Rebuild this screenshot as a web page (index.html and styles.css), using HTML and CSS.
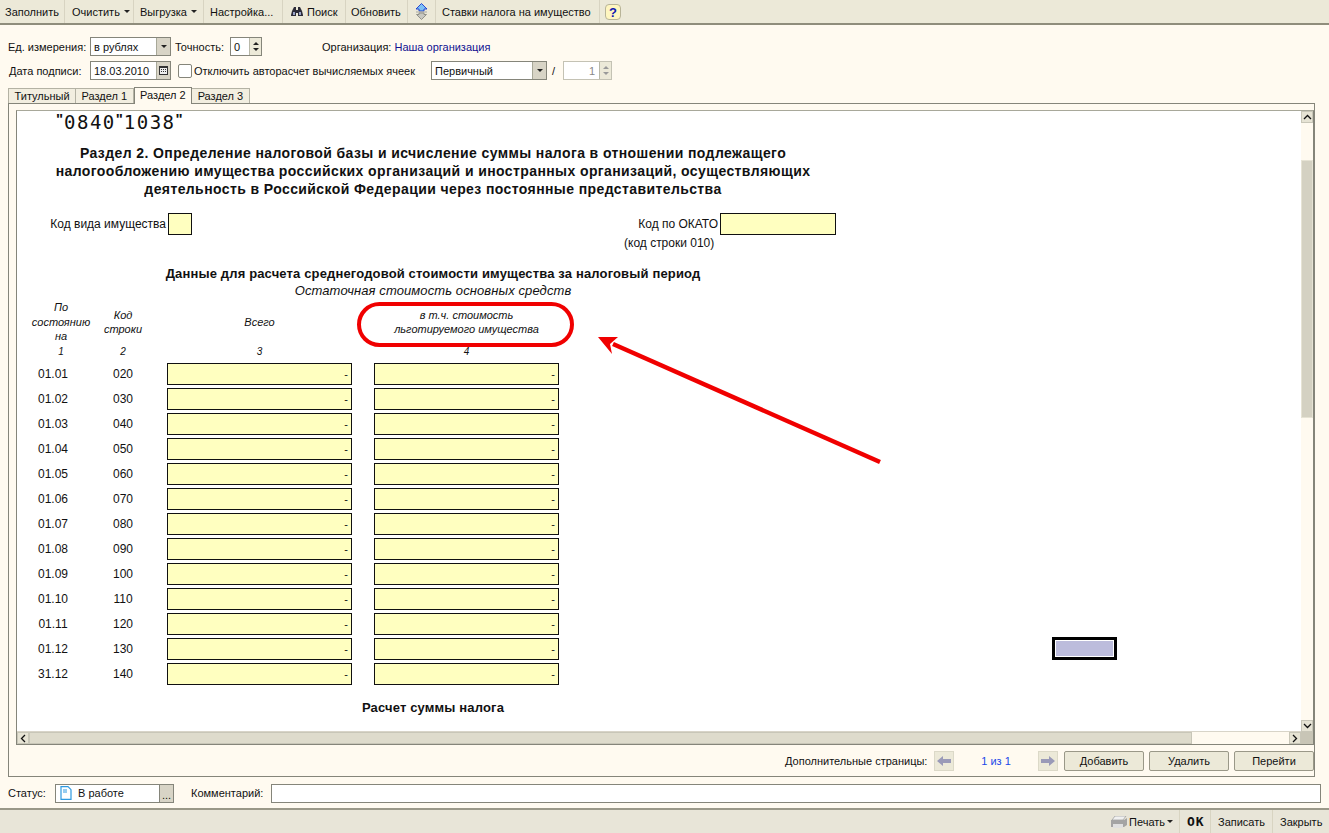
FILE: index.html
```html
<!DOCTYPE html>
<html lang="ru">
    <head>
        <meta charset="UTF-8">
        <title>Раздел 2</title>
        <link rel="stylesheet" href="styles.css">
    </head>
    <body>
        <div class="toolbar">
            <span class="tool t-fill">Заполнить</span>
            <span class="tool t-clear">Очистить <i class="caret"></i></span>
            <span class="tool t-export">Выгрузка <i class="caret"></i></span>
            <span class="tool t-setup">Настройка...</span>
            <span class="tool t-find">
                <svg width="12" height="9" viewBox="0 0 12 9"><path d="M1 4 L3 0 H5 V3 H7 V0 H9 L11 4 L12 8 V9 H7 V6 H5 V9 H0 V8 Z" fill="#2c2c38"/><rect x="2" y="5" width="2" height="3" fill="#9aa4c8"/><rect x="8" y="5" width="2" height="3" fill="#9aa4c8"/></svg>
                Поиск
            </span>
            <span class="tool t-refresh">Обновить</span>
            <span class="tool t-arrows">
                <svg width="13" height="17" viewBox="0 0 13 17"><path d="M6.5 .5 L12 6 H9 V8 H4 V6 H1 Z" fill="#7cc0f4" stroke="#1838d0" stroke-width=".9"/><path d="M1 9 H12" stroke="#a8a8a0"/><path d="M4 10 H9 V11.5 H11.5 L6.5 16.5 L1.5 11.5 H4 Z" fill="#c8c8c0" stroke="#8a8a82" stroke-width=".9"/></svg>
            </span>
            <span class="tool t-rates">Ставки налога на имущество</span>
            <span class="tool t-help"><b class="help">?</b></span>
        </div>

        <div class="params">
            <div class="param-row">
                <label class="lbl-unit">Ед. измерения:</label>
                <span class="field combo w-unit">в рублях<i class="drop"><i class="caret dark"></i></i></span>
                <label class="lbl-prec">Точность:</label>
                <span class="field spin w-prec">0<i class="spinner"><i class="up"></i><i class="down"></i></i></span>
                <span class="org">Организация: <a>Наша организация</a></span>
            </div>
            <div class="param-row">
                <label class="lbl-date">Дата подписи:</label>
                <span class="field combo w-date">18.03.2010<i class="drop cal"><svg width="9" height="9" viewBox="0 0 9 9"><path d="M0 0H9V9H0Z" fill="#333"/><path d="M1 2H8V8H1Z" fill="#eee"/><path d="M2 3H3V4H2ZM4 3H5V4H4ZM6 3H7V4H6ZM2 5H3V6H2ZM4 5H5V6H4ZM6 5H7V6H6Z" fill="#333"/></svg></i></span>
                <span class="check"></span>
                <label class="lbl-check">Отключить авторасчет вычисляемых ячеек</label>
                <span class="field combo w-kind">Первичный<i class="drop"><i class="caret dark"></i></i></span>
                <span class="slash">/</span>
                <span class="field spin off w-num">1<i class="spinner"><i class="up"></i><i class="down"></i></i></span>
            </div>
        </div>

        <div class="tabs">
            <span class="tab">Титульный</span>
            <span class="tab">Раздел 1</span>
            <span class="tab active">Раздел 2</span>
            <span class="tab">Раздел 3</span>
        </div>

        <div class="panel">
            <div class="sheet">
                <div class="view">
                    <div class="barcode"><span class="q">"</span>0840<span class="q">"</span>1038<span class="q">"</span></div>
                    <h2 class="title">Раздел 2. Определение налоговой базы и исчисление суммы налога в отношении подлежащего<br>налогообложению имущества российских организаций и иностранных организаций, осуществляющих<br>деятельность в Российской Федерации через постоянные представительства</h2>

                    <div class="codes">
                        <span class="code-label">Код вида имущества</span>
                        <span class="cell small"></span>
                        <span class="code-label okato">Код по ОКАТО</span>
                        <span class="cell middle"></span>
                    </div>
                    <div class="code-note">(код строки 010)</div>

                    <div class="caption">Данные для расчета среднегодовой стоимости имущества за налоговый период</div>
                    <div class="subcaption">Остаточная стоимость основных средств</div>

                    <div class="row head">
                        <span class="c-date">По<br>состоянию<br>на</span>
                        <span class="c-code">Код<br>строки</span>
                        <span class="c-val">Всего</span>
                        <span class="c-val second">в т.ч. стоимость<br>льготируемого имущества</span>
                    </div>
                    <div class="row nums">
                        <span class="c-date">1</span>
                        <span class="c-code">2</span>
                        <span class="c-val">3</span>
                        <span class="c-val second">4</span>
                    </div>

                    <div class="row"><span class="c-date">01.01</span><span class="c-code">020</span><span class="cell c-val">-</span><span class="cell c-val second">-</span></div>
                    <div class="row"><span class="c-date">01.02</span><span class="c-code">030</span><span class="cell c-val">-</span><span class="cell c-val second">-</span></div>
                    <div class="row"><span class="c-date">01.03</span><span class="c-code">040</span><span class="cell c-val">-</span><span class="cell c-val second">-</span></div>
                    <div class="row"><span class="c-date">01.04</span><span class="c-code">050</span><span class="cell c-val">-</span><span class="cell c-val second">-</span></div>
                    <div class="row"><span class="c-date">01.05</span><span class="c-code">060</span><span class="cell c-val">-</span><span class="cell c-val second">-</span></div>
                    <div class="row"><span class="c-date">01.06</span><span class="c-code">070</span><span class="cell c-val">-</span><span class="cell c-val second">-</span></div>
                    <div class="row"><span class="c-date">01.07</span><span class="c-code">080</span><span class="cell c-val">-</span><span class="cell c-val second">-</span></div>
                    <div class="row"><span class="c-date">01.08</span><span class="c-code">090</span><span class="cell c-val">-</span><span class="cell c-val second">-</span></div>
                    <div class="row"><span class="c-date">01.09</span><span class="c-code">100</span><span class="cell c-val">-</span><span class="cell c-val second">-</span></div>
                    <div class="row"><span class="c-date">01.10</span><span class="c-code">110</span><span class="cell c-val">-</span><span class="cell c-val second">-</span></div>
                    <div class="row"><span class="c-date">01.11</span><span class="c-code">120</span><span class="cell c-val">-</span><span class="cell c-val second">-</span></div>
                    <div class="row"><span class="c-date">01.12</span><span class="c-code">130</span><span class="cell c-val">-</span><span class="cell c-val second">-</span><span class="selected"></span></div>
                    <div class="row"><span class="c-date">31.12</span><span class="c-code">140</span><span class="cell c-val">-</span><span class="cell c-val second">-</span></div>

                    <div class="caption total">Расчет суммы налога</div>

                    <!-- пометки поверх листа -->
                    <div class="oval"></div>
                    <svg class="arrow" width="300" height="140" viewBox="0 0 300 140">
                        <path d="M283 127 L16 9" stroke="#f00000" stroke-width="4.5" fill="none"/>
                        <path d="M1 2 L21 2 L13 9 L15 19 Z" fill="#f00000"/>
                    </svg>
                </div>
                <div class="vbar">
                    <span class="sbtn"><svg width="9" height="6" viewBox="0 0 9 6"><path d="M1 5 L4.5 1.5 L8 5" fill="none" stroke="#111" stroke-width="1.3"/></svg></span>
                    <span class="vtrack"><i class="vthumb"></i></span>
                    <span class="sbtn"><svg width="9" height="6" viewBox="0 0 9 6"><path d="M1 1 L4.5 4.5 L8 1" fill="none" stroke="#111" stroke-width="1.3"/></svg></span>
                </div>
                <div class="hbar">
                    <span class="sbtn"><svg width="6" height="9" viewBox="0 0 6 9"><path d="M5 1 L1.5 4.5 L5 8" fill="none" stroke="#111" stroke-width="1.3"/></svg></span>
                    <span class="htrack"><i class="hthumb"></i></span>
                    <span class="sbtn"><svg width="6" height="9" viewBox="0 0 6 9"><path d="M1 1 L4.5 4.5 L1 8" fill="none" stroke="#111" stroke-width="1.3"/></svg></span>
                </div>
                <div class="corner"></div>
            </div>

            <div class="pages">
                <span class="pages-label">Дополнительные страницы:</span>
                <span class="nav"><svg width="14" height="10" viewBox="0 0 14 10"><path d="M0 5 L6 0 V3 H14 V7 H6 V10 Z" fill="#9a9ab8"/></svg></span>
                <span class="pages-count">1 из 1</span>
                <span class="nav"><svg width="14" height="10" viewBox="0 0 14 10"><path d="M14 5 L8 0 V3 H0 V7 H8 V10 Z" fill="#9a9ab8"/></svg></span>
                <button class="btn">Добавить</button>
                <button class="btn">Удалить</button>
                <button class="btn">Перейти</button>
            </div>
        </div>

        <div class="status">
            <label class="lbl-status">Статус:</label>
            <span class="field w-status">
                <svg width="12" height="14" viewBox="0 0 12 14"><path d="M1 .7H8L11 3.7V13.3H1Z" fill="#fff" stroke="#2f9ae0" stroke-width="1.2"/><path d="M3 4H7M3 6H7" stroke="#2f9ae0"/></svg>
                В работе
            </span>
            <span class="dots">...</span>
            <label class="lbl-comment">Комментарий:</label>
            <span class="field w-comment"></span>
        </div>

        <div class="footer">
            <span class="tool f-print">
                <svg width="16" height="12" viewBox="0 0 16 12"><path d="M4 0H15L12 4H1Z" fill="#f0f0f0" stroke="#9a9a9a" stroke-width=".7"/><path d="M0 4H13L16 2V9L13 11H0Z" fill="#a4a4a4"/><path d="M2 8H12V12H2Z" fill="#e0e0e0"/></svg>
                Печать <i class="caret"></i>
            </span>
            <span class="tool f-ok">OK</span>
            <span class="tool f-save">Записать</span>
            <span class="tool f-close">Закрыть</span>
        </div>
    </body>
</html>
```

FILE: styles.css
```css
* {
    box-sizing: border-box;
}

html, body {
    margin: 0;
    height: 100%;
}

body {
    width: 1329px;
    height: 833px;
    overflow: hidden;
    display: flex;
    flex-direction: column;
    font-family: "Liberation Sans", Arial, sans-serif;
    font-size: 11px;
    color: #111;
    background-color: #fffaf0;
}

i {
    font-style: normal;
}

/* toolbar */
.toolbar {
    height: 25px;
    flex: none;
    display: flex;
    align-items: stretch;
    background-color: #ece9d8;
    border-bottom: 2px solid #8f8d7c;
}

.tool {
    display: flex;
    align-items: center;
    gap: 4px;
    white-space: nowrap;
    border-right: 1px solid #d8d4c2;
}

.t-fill { width: 65px; padding-left: 5px; }
.t-clear { width: 69px; padding-left: 7px; }
.t-export { width: 70px; padding-left: 6px; }
.t-setup { width: 79px; padding-left: 6px; }
.t-find { width: 63px; padding-left: 8px; }
.t-refresh { width: 62px; padding-left: 5px; }
.t-arrows { width: 28px; padding-left: 7px; }
.t-rates { width: 164px; padding-left: 6px; }
.t-help { width: 30px; padding-left: 5px; border-right: none; }

.caret {
    display: inline-block;
    width: 0;
    height: 0;
    border-left: 3px solid transparent;
    border-right: 3px solid transparent;
    border-top: 3px solid #222;
}

.help {
    width: 16px;
    height: 16px;
    display: block;
    text-align: center;
    line-height: 15px;
    font-size: 13px;
    color: #1018b0;
    background-color: #fff6c0;
    border: 1px solid #b8b498;
    border-radius: 4px;
}

/* params */
.params {
    flex: none;
    height: 62px;
    padding-top: 12px;
}

.param-row {
    display: flex;
    align-items: center;
    height: 19px;
    margin-bottom: 5px;
}

.field {
    display: flex;
    align-items: center;
    height: 19px;
    padding-left: 3px;
    background-color: #fff;
    border: 1px solid #85857a;
    white-space: nowrap;
}

.combo, .spin {
    position: relative;
}

.drop {
    margin-left: auto;
    width: 14px;
    height: 17px;
    display: flex;
    align-items: center;
    justify-content: center;
    background-color: #d8d4c6;
    border-left: 1px solid #a8a898;
}

.spinner {
    margin-left: auto;
    width: 12px;
    height: 17px;
    display: flex;
    flex-direction: column;
    align-items: center;
    justify-content: space-around;
    padding: 2px 0;
    background-color: #ece9d8;
    border-left: 1px solid #b8b8a8;
}

.up, .down {
    width: 0;
    height: 0;
    border-left: 3px solid transparent;
    border-right: 3px solid transparent;
}

.up { border-bottom: 3px solid #222; }
.down { border-top: 3px solid #222; }

.off { color: #888; border-color: #c4c2b4; padding-left: 0; justify-content: flex-end; }
.off .spinner { margin-left: 4px; }
.off .up { border-bottom-color: #999; }
.off .down { border-top-color: #999; }

.lbl-unit { margin-left: 8px; width: 82px; }
.w-unit { width: 81px; }
.lbl-prec { margin-left: 4px; width: 55px; }
.w-prec { width: 32px; }
.org { margin-left: 60px; }
.org a { color: #101090; }

.lbl-date { margin-left: 9px; width: 81px; }
.w-date { width: 81px; }
.check {
    width: 14px;
    height: 14px;
    margin-left: 7px;
    background-color: #fff;
    border: 1px solid #85857a;
    border-radius: 2px;
}
.lbl-check { margin-left: 2px; width: 237px; }
.w-kind { width: 116px; }
.slash { margin-left: 5px; width: 11px; }
.w-num { width: 49px; padding-right: 0; }

/* tabs */
.tabs {
    flex: none;
    height: 16px;
    margin-left: 8px;
    display: flex;
    align-items: flex-end;
}

.tab {
    height: 15px;
    padding: 0 5.5px;
    line-height: 15px;
    background-color: #f2eee0;
    border: 1px solid #b4b2a4;
    border-bottom: none;
    border-left: none;
}

.tab:first-child {
    border-left: 1px solid #b4b2a4;
}

.tab.active {
    height: 17px;
    position: relative;
    top: 1px;
    background-color: #fffaf0;
    border: 1px solid #85857a;
    border-bottom: none;
}

/* main panel */
.panel {
    flex: none;
    width: 1307px;
    height: 674px;
    margin-left: 8px;
    padding: 6px 0 0 7px;
    border: 1px solid #85857a;
}

.sheet {
    width: 1298px;
    height: 635px;
    display: grid;
    grid-template-columns: 1fr 12px;
    grid-template-rows: 1fr 12px;
    background-color: #fff;
    border: 1px solid #85857a;
    border-top-color: #a8a89a;
}

.view {
    position: relative;
    overflow: hidden;
    border-bottom: 1px solid #d8d4c8;
}

.vbar {
    display: flex;
    flex-direction: column;
    background-color: #fffaf0;
}

.hbar {
    display: flex;
    background-color: #fffaf0;
}

.sbtn {
    flex: none;
    width: 12px;
    height: 12px;
    display: flex;
    align-items: center;
    justify-content: center;
    background-color: #e6e3d4;
    border: 1px solid #c8c6b8;
}

.vtrack {
    flex: 1;
    padding-top: 37px;
}

.vthumb {
    display: block;
    height: 258px;
    background-color: #d4d1c2;
    border: 1px solid #e6e3d4;
}

.htrack {
    flex: 1;
}

.hthumb {
    display: block;
    width: 1163px;
    height: 12px;
    background-color: #dedbcc;
    border: 1px solid #c8c6b8;
}

.corner {
    background-color: #c8c5b6;
}

/* sheet content */
.barcode {
    height: 24px;
    padding: 1px 0 0 39px;
    font-family: "DejaVu Sans Mono", monospace;
    font-size: 19px;
    letter-spacing: 1.5px;
    line-height: 18px;
}

.q {
    display: inline-block;
    width: 8px;
    font-family: "Liberation Sans", Arial, sans-serif;
    font-size: 15px;
    font-weight: bold;
    letter-spacing: 0;
    line-height: 13px;
    vertical-align: 5px;
}

.title {
    width: 832px;
    margin: 9px 0 0;
    font-size: 14px;
    line-height: 18px;
    text-align: center;
    letter-spacing: .4px;
}

.codes {
    display: flex;
    align-items: center;
    height: 22px;
    margin-top: 15px;
    font-size: 12px;
}

.code-label {
    width: 149px;
    text-align: right;
    margin-right: 2px;
}

.code-label.okato {
    width: 526px;
}

.cell {
    height: 22px;
    display: flex;
    align-items: center;
    justify-content: flex-end;
    padding-right: 3px;
    background-color: #ffffc0;
    border: 1px solid #111;
}

.cell.small { width: 24px; }
.cell.middle { width: 116px; }

.code-note {
    margin: 1px 0 0 607px;
    height: 14px;
    line-height: 14px;
    font-size: 12px;
}

.caption {
    width: 832px;
    margin-top: 16px;
    font-size: 13px;
    line-height: 16px;
    font-weight: bold;
    text-align: center;
    letter-spacing: .15px;
}

.subcaption {
    width: 832px;
    font-size: 13px;
    line-height: 17px;
    font-style: italic;
    text-align: center;
    letter-spacing: .1px;
}

.row {
    display: flex;
    align-items: center;
    height: 25px;
    padding-left: 14px;
    font-size: 12px;
}

.row.head {
    height: 42px;
    margin-top: 2px;
    font-size: 11px;
    line-height: 14.5px;
    font-style: italic;
    text-align: center;
}

.row.nums {
    height: 17px;
    margin-bottom: 1px;
    font-size: 10px;
    font-style: italic;
    text-align: center;
}

.c-date {
    width: 44px;
    margin-right: 12px;
    text-align: center;
}

.head .c-date, .nums .c-date {
    width: 66px;
    margin-left: -3px;
    margin-right: -7px;
}

.c-code {
    width: 72px;
    text-align: center;
}

.c-val {
    width: 185px;
    margin-left: 8px;
    font-size: 11px;
}

.c-val.second {
    margin-left: 22px;
}

.head .c-val, .nums .c-val {
    text-align: center;
}

.nums .c-val {
    font-size: 10px;
}

.selected {
    width: 65px;
    height: 23px;
    margin-left: 493px;
    background-color: #bcbcdc;
    border: 3px solid #000;
    outline: 1px solid #fff;
    outline-offset: -4px;
}

.caption.total {
    margin-top: 14px;
    letter-spacing: .15px;
}

.oval {
    position: absolute;
    left: 340px;
    top: 191px;
    width: 217px;
    height: 45px;
    border: 4px solid #f00000;
    border-radius: 23px;
}

.arrow {
    position: absolute;
    left: 580px;
    top: 224px;
}

/* under the sheet */
.pages {
    display: flex;
    align-items: center;
    height: 32px;
    padding-left: 769px;
}

.pages-label {
    width: 149px;
    flex: none;
}

.nav {
    flex: none;
    width: 20px;
    height: 20px;
    display: flex;
    align-items: center;
    justify-content: center;
    background-color: #ece9d8;
    border: 1px solid #dcd9c8;
}

.pages-count {
    flex: none;
    width: 84px;
    text-align: center;
    color: #2048e8;
}

.btn {
    flex: none;
    width: 80px;
    height: 20px;
    margin-left: 5px;
    padding: 0;
    font: inherit;
    color: #111;
    background-color: #ece9d8;
    border: 1px solid #9a9888;
    border-radius: 2px;
}

.nav + .btn {
    margin-left: 6px;
}

/* status */
.status {
    flex: none;
    height: 31px;
    display: flex;
    align-items: center;
    padding-top: 1px;
}

.lbl-status { margin-left: 8px; width: 47px; }
.w-status { width: 105px; gap: 6px; padding-left: 4px; }
.dots {
    width: 14px;
    height: 19px;
    line-height: 20px;
    text-align: center;
    background-color: #d8d4c6;
    border: 1px solid #85857a;
    border-left: none;
}
.lbl-comment { margin-left: 17px; width: 80px; }
.w-comment { width: 1050px; }

/* footer */
.footer {
    flex: 1;
    display: flex;
    justify-content: flex-end;
    align-items: stretch;
    background-color: #e8e5d8;
    border-top: 2px solid #9a9888;
}

.footer .tool:last-child { border-right: none; }

.f-print { width: 73px; gap: 2px; padding-left: 4px; }
.f-ok { width: 31px; padding-left: 7px; font-family: "DejaVu Sans Mono", monospace; font-weight: bold; font-size: 13px; letter-spacing: 1px; }
.f-save { width: 62px; padding-left: 7px; }
.f-close { width: 56px; padding-left: 7px; }
```
